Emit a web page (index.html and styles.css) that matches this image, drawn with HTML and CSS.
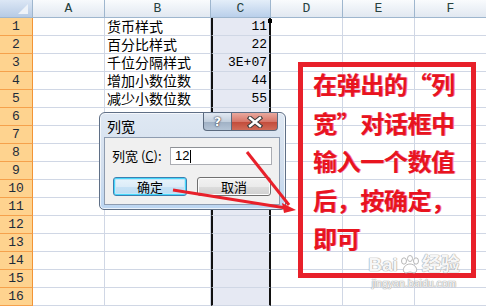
FILE: index.html
```html
<!DOCTYPE html>
<html lang="zh-CN">
<head>
<meta charset="utf-8">
<title>列宽</title>
<link rel="stylesheet" href="styles.css">
</head>
<body>
<div class="sheet">
  <div class="row hdr">
    <div class="corner"></div><div class="ch">A</div><div class="ch">B</div><div class="ch sel">C</div><div class="ch">D</div><div class="ch">E</div><div class="ch">F</div>
  </div>
  <div class="row"><div class="rh">1</div><div class="c"></div><div class="c b">货币样式</div><div class="c cc">11</div><div class="c"></div><div class="c"></div><div class="c"></div></div>
  <div class="row"><div class="rh">2</div><div class="c"></div><div class="c b">百分比样式</div><div class="c cc">22</div><div class="c"></div><div class="c"></div><div class="c"></div></div>
  <div class="row"><div class="rh">3</div><div class="c"></div><div class="c b">千位分隔样式</div><div class="c cc">3E+07</div><div class="c"></div><div class="c"></div><div class="c"></div></div>
  <div class="row"><div class="rh">4</div><div class="c"></div><div class="c b">增加小数位数</div><div class="c cc">44</div><div class="c"></div><div class="c"></div><div class="c"></div></div>
  <div class="row"><div class="rh">5</div><div class="c"></div><div class="c b">减少小数位数</div><div class="c cc">55</div><div class="c"></div><div class="c"></div><div class="c"></div></div>
  <div class="row"><div class="rh">6</div><div class="c"></div><div class="c"></div><div class="c cc"></div><div class="c"></div><div class="c"></div><div class="c"></div></div>
  <div class="row"><div class="rh">7</div><div class="c"></div><div class="c"></div><div class="c cc"></div><div class="c"></div><div class="c"></div><div class="c"></div></div>
  <div class="row"><div class="rh">8</div><div class="c"></div><div class="c"></div><div class="c cc"></div><div class="c"></div><div class="c"></div><div class="c"></div></div>
  <div class="row"><div class="rh">9</div><div class="c"></div><div class="c"></div><div class="c cc"></div><div class="c"></div><div class="c"></div><div class="c"></div></div>
  <div class="row"><div class="rh">10</div><div class="c"></div><div class="c"></div><div class="c cc"></div><div class="c"></div><div class="c"></div><div class="c"></div></div>
  <div class="row"><div class="rh">11</div><div class="c"></div><div class="c"></div><div class="c cc"></div><div class="c"></div><div class="c"></div><div class="c"></div></div>
  <div class="row"><div class="rh">12</div><div class="c"></div><div class="c"></div><div class="c cc"></div><div class="c"></div><div class="c"></div><div class="c"></div></div>
  <div class="row"><div class="rh">13</div><div class="c"></div><div class="c"></div><div class="c cc"></div><div class="c"></div><div class="c"></div><div class="c"></div></div>
  <div class="row"><div class="rh">14</div><div class="c"></div><div class="c"></div><div class="c cc"></div><div class="c"></div><div class="c"></div><div class="c"></div></div>
  <div class="row"><div class="rh">15</div><div class="c"></div><div class="c"></div><div class="c cc"></div><div class="c"></div><div class="c"></div><div class="c"></div></div>
  <div class="row"><div class="rh">16</div><div class="c"></div><div class="c"></div><div class="c cc"></div><div class="c"></div><div class="c"></div><div class="c"></div></div>

  <div class="handle"></div>

  <div class="dialog">
    <div class="titlebar">
      <span class="title">列宽</span>
      <div class="tbtns">
        <div class="tb help">?</div>
        <div class="tb close">
          <svg width="16" height="12" viewBox="0 0 16 12"><path d="M3 2 L13 10 M13 2 L3 10" stroke="#3a3a3a" stroke-width="4.5" stroke-linecap="square"/><path d="M3 2 L13 10 M13 2 L3 10" stroke="#fff" stroke-width="2.4" stroke-linecap="square"/></svg>
        </div>
      </div>
    </div>
    <div class="panel">
      <div class="field">
        <span class="lbl">列宽 (<u>C</u>):</span>
        <div class="input">12<span class="caret"></span></div>
      </div>
      <div class="actions">
        <div class="btn ok">确定</div>
        <div class="btn">取消</div>
      </div>
    </div>
  </div>

  <div class="note">
    <p>在弹出的“列<br>宽”对话框中<br>输入一个数值<br>后，按确定，<br>即可</p>
  </div>

  <div class="wm">
    <div class="wm1">Bai<svg class="paw" width="22" height="20" viewBox="0 0 22 20"><g fill="rgba(255,255,255,0.9)" stroke="#b8b8b8" stroke-width="1"><ellipse cx="5" cy="6" rx="2.5" ry="3.2"/><ellipse cx="11" cy="3.5" rx="2.5" ry="3"/><ellipse cx="17" cy="6" rx="2.5" ry="3.2"/><path d="M11 9 C6 9 3 14 5 17 C7 19 9 17 11 17 C13 17 15 19 17 17 C19 14 16 9 11 9 Z"/></g></svg>经验</div>
    <div class="wm2">jingyan.baidu.com</div>
  </div>

  <svg class="arrows" width="486" height="306" viewBox="0 0 486 306">
    <path d="M247 152 L289 205" stroke="#e8202a" stroke-width="3" fill="none"/>
    <path d="M173 190 L286 208" stroke="#e8202a" stroke-width="3" fill="none"/>
    <path d="M296 210 L282 203 L284 213 Z" fill="#e8202a"/>
  </svg>
</div>
</body>
</html>
```

FILE: styles.css
```css
* { box-sizing: border-box; }
html, body { margin: 0; padding: 0; }
body { background: #fff; width: 486px; height: 306px; overflow: hidden; }

.sheet {
  position: relative;
  width: 486px;
  height: 306px;
  overflow: hidden;
  font-family: "Noto Sans CJK SC", sans-serif;
}

.row {
  display: grid;
  grid-template-columns: 33px 72px 106px 60px 72px 72px 72px;
  height: 18px;
}

.ch {
  height: 18px;
  border-right: 1px solid #9eb6ce;
  border-bottom: 1px solid #9eb6ce;
  background: linear-gradient(#f9fbfd, #e1e8f1);
  color: #27413e;
  font-family: "Liberation Mono", monospace;
  font-size: 13px;
  line-height: 17px;
  text-align: center;
}
.ch.sel {
  background: linear-gradient(#e4eef9, #b9cfea);
}

.corner {
  position: relative;
  height: 18px;
  border-right: 1px solid #9eb6ce;
  border-bottom: 1px solid #9eb6ce;
  background: linear-gradient(#dce7f5, #b7cbe5);
}
.corner::after {
  content: "";
  position: absolute;
  right: 4px;
  bottom: 3px;
  width: 0;
  height: 0;
  border-left: 10px solid transparent;
  border-bottom: 10px solid #eef3f9;
}

.rh {
  height: 18px;
  border-right: 1px solid #f29436;
  border-bottom: 1px solid #f5a14c;
  background: #fed38f;
  color: #1d2b3a;
  font-family: "Liberation Mono", monospace;
  font-size: 13px;
  line-height: 17px;
  text-align: center;
}

.c {
  height: 18px;
  border-right: 1px solid #d0d7e5;
  border-bottom: 1px solid #d0d7e5;
  color: #000;
  font-size: 14px;
  line-height: 17px;
  white-space: nowrap;
}
.c.b { padding-left: 2px; }
.c.cc {
  background: #e6e9f3;
  border-left: 2px solid #111;
  border-right: 2px solid #111;
  text-align: right;
  padding-right: 2px;
  font-family: "Liberation Mono", monospace;
  font-size: 13px;
}

.handle {
  position: absolute;
  left: 268px;
  top: 19px;
  width: 4px;
  height: 4px;
  background: #000;
}

/* dialog */
.dialog {
  position: absolute;
  left: 99px;
  top: 112px;
  width: 187px;
  height: 98px;
  border: 1px solid #5f6f86;
  border-radius: 6px 6px 5px 5px;
  background: linear-gradient(#dfe8f3 0%, #d2deed 60%, #bcd6f2 100%);
  box-shadow: inset 0 0 0 1px rgba(255,255,255,0.7);
  display: flex;
  flex-direction: column;
  padding: 0 5px 4px 4px;
}
.titlebar {
  height: 24px;
  display: flex;
  justify-content: space-between;
  align-items: flex-start;
}
.title {
  font-size: 14px;
  line-height: 16px;
  color: #000;
  padding: 5px 0 0 3px;
}
.tbtns {
  display: flex;
  margin-right: 2px;
}
.tb {
  height: 18px;
  border: 1px solid #5b6a7e;
  border-top: none;
  display: flex;
  align-items: center;
  justify-content: center;
}
.help {
  width: 29px;
  border-radius: 0 0 0 4px;
  background: linear-gradient(#e2e9f2 0%, #c3cfdd 50%, #9fb0c4 51%, #b4c4d6 100%);
  color: #fff;
  font-family: "DejaVu Sans", sans-serif;
  font-weight: bold;
  font-size: 13px;
  text-shadow: 0 0 2px #334, 0 0 1px #223;
}
.close {
  width: 46px;
  border-left: none;
  border-radius: 0 0 4px 0;
  background: linear-gradient(#e9a99e 0%, #d7776a 50%, #c24a39 51%, #d06b58 100%);
}
.panel {
  flex: 1;
  background: #f0f0f0;
  border: 1px solid #8e9cb0;
  padding: 9px 0 0 7px;
  display: flex;
  flex-direction: column;
}
.field {
  display: flex;
  align-items: center;
  height: 18px;
}
.lbl {
  width: 58px;
  font-size: 13px;
  color: #000;
  line-height: 16px;
}
.lbl u { text-decoration-thickness: 1px; }
.input {
  width: 102px;
  height: 18px;
  background: #fff;
  border: 1px solid #abadb3;
  border-top-color: #8e9196;
  font-family: "Liberation Sans", sans-serif;
  font-size: 13px;
  line-height: 16px;
  padding-left: 4px;
  display: flex;
  align-items: center;
}
.caret {
  display: inline-block;
  width: 1px;
  height: 13px;
  background: #000;
  margin-left: 1px;
}
.actions {
  display: flex;
  gap: 10px;
  margin-top: 12px;
  padding-left: 1px;
}
.btn {
  width: 74px;
  height: 19px;
  border: 1px solid #707070;
  border-radius: 3px;
  background: linear-gradient(#f2f2f2 0%, #ebebeb 50%, #dddddd 51%, #cfcfcf 100%);
  box-shadow: inset 0 0 0 1px #fcfcfc;
  font-size: 13px;
  line-height: 17px;
  text-align: center;
  color: #000;
}
.btn.ok {
  border-color: #3c7fb1;
  box-shadow: inset 0 0 0 1px #48d8fb, inset 0 0 0 2px #c2e6f8;
  background: linear-gradient(#e8f4fb 0%, #dcecf8 50%, #c7e2f5 51%, #bcdcf3 100%);
}

/* red note */
.note {
  position: absolute;
  left: 298px;
  top: 62px;
  width: 178px;
  height: 216px;
  border: 5px solid #e8202a;
}
.note p {
  margin: -2px 0 0 0;
  padding-left: 10px;
  font-family: "Noto Sans CJK SC", sans-serif;
  font-weight: bold;
  font-size: 24px;
  letter-spacing: -0.4px;
  line-height: 38.5px;
  color: #e8141e;
  text-shadow: 1px 0 0 #f07aa8;
  white-space: nowrap;
}

.arrows {
  position: absolute;
  left: 0;
  top: 0;
  pointer-events: none;
}

/* watermark */
.wm {
  position: absolute;
  left: 368px;
  top: 254px;
  width: 92px;
  color: rgba(255,255,255,0.92);
  text-shadow: 0 0 1px #a8a8a8, 0 0 1px #a8a8a8, 0 0 1px #a8a8a8;
  text-align: center;
}
.wm1 {
  display: flex;
  align-items: center;
  justify-content: center;
  font-family: "Liberation Sans", "Noto Sans CJK SC", sans-serif;
  font-weight: bold;
  font-size: 19px;
  line-height: 22px;
  letter-spacing: 0;
}
.paw { margin: 0 1px; }
.wm2 {
  font-family: "Liberation Sans", sans-serif;
  font-size: 10.5px;
  line-height: 14px;
}
```
